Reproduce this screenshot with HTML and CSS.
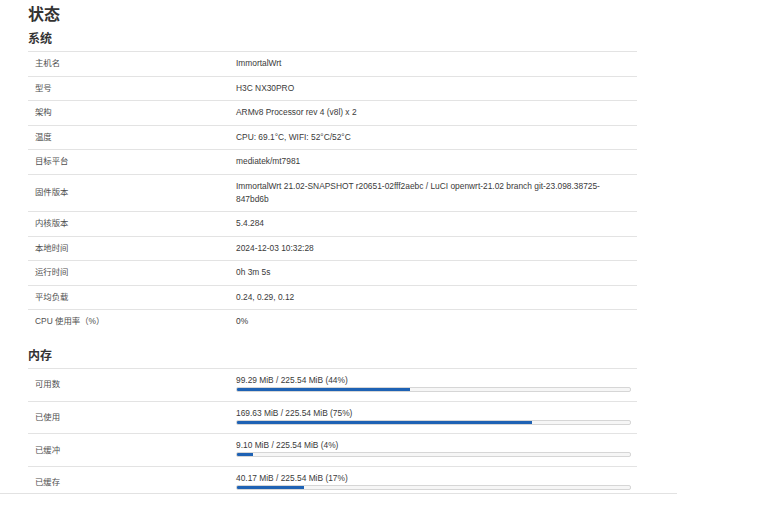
FILE: index.html
```html
<!DOCTYPE html>
<html lang="zh-CN">
<head>
    <meta charset="UTF-8">
    <meta name="viewport" content="width=device-width, initial-scale=1.0">
    <title>状态 - ImmortalWrt</title>
    <link rel="stylesheet" href="styles.css">
</head>
<body>
    <div class="main">
        <h2>状态</h2>

        <h3>系统</h3>
        <table class="info-table">
            <tr><td class="key">主机名</td><td>ImmortalWrt</td></tr>
            <tr><td class="key">型号</td><td>H3C NX30PRO</td></tr>
            <tr><td class="key">架构</td><td>ARMv8 Processor rev 4 (v8l) x 2</td></tr>
            <tr><td class="key">温度</td><td>CPU: 69.1°C, WIFI: 52°C/52°C</td></tr>
            <tr><td class="key">目标平台</td><td>mediatek/mt7981</td></tr>
            <tr><td class="key">固件版本</td><td>ImmortalWrt 21.02-SNAPSHOT r20651-02fff2aebc / LuCI openwrt-21.02 branch git-23.098.38725-847bd6b</td></tr>
            <tr><td class="key">内核版本</td><td>5.4.284</td></tr>
            <tr><td class="key">本地时间</td><td>2024-12-03 10:32:28</td></tr>
            <tr><td class="key">运行时间</td><td>0h 3m 5s</td></tr>
            <tr><td class="key">平均负载</td><td>0.24, 0.29, 0.12</td></tr>
            <tr><td class="key">CPU 使用率（%）</td><td>0%</td></tr>
        </table>

        <h3 class="section">内存</h3>
        <table class="info-table mem-table">
            <tr>
                <td class="key">可用数</td>
                <td>
                    <div class="bar-label">99.29 MiB / 225.54 MiB (44%)</div>
                    <div class="bar"><div class="bar-fill" style="width: 44%"></div></div>
                </td>
            </tr>
            <tr>
                <td class="key">已使用</td>
                <td>
                    <div class="bar-label">169.63 MiB / 225.54 MiB (75%)</div>
                    <div class="bar"><div class="bar-fill" style="width: 75%"></div></div>
                </td>
            </tr>
            <tr>
                <td class="key">已缓冲</td>
                <td>
                    <div class="bar-label">9.10 MiB / 225.54 MiB (4%)</div>
                    <div class="bar"><div class="bar-fill" style="width: 4%"></div></div>
                </td>
            </tr>
            <tr>
                <td class="key">已缓存</td>
                <td>
                    <div class="bar-label">40.17 MiB / 225.54 MiB (17%)</div>
                    <div class="bar"><div class="bar-fill" style="width: 17%"></div></div>
                </td>
            </tr>
        </table>
    </div>
</body>
</html>
```

FILE: styles.css
```css
body {
    margin: 0;
    background: #fff;
    font-family: "Liberation Sans", "Noto Sans CJK SC", sans-serif;
    color: #333;
}

.main {
    box-sizing: border-box;
    width: 677px;
    height: 494px;
    padding: 4px 40px 0 28px;
    overflow: hidden;
    border-bottom: 1px solid #e2e2e2;
}

h2 {
    margin: 0 0 5px;
    font-size: 16px;
    line-height: 22px;
    font-weight: bold;
    color: #333;
}

h3 {
    margin: 0 0 4px;
    font-size: 12px;
    line-height: 16px;
    font-weight: bold;
    color: #333;
}

h3.section {
    margin-top: 14.5px;
}

.info-table {
    width: 100%;
    border-collapse: collapse;
    table-layout: fixed;
    font-size: 8.4px;
    line-height: 13px;
}

.info-table td {
    border-top: 1px solid #e3e3e3;
    padding: 5.25px 8px;
    vertical-align: middle;
    color: #3a3a3a;
}

.info-table td.key {
    box-sizing: border-box;
    width: 200px;
    padding-left: 7px;
    color: #505050;
}

.mem-table td {
    padding: 5px 8px 8.67px;
}

.mem-table td.key {
    padding-top: 7px;
    padding-bottom: 7px;
}

.bar-label {
    line-height: 12px;
}

.bar {
    box-sizing: border-box;
    height: 5px;
    margin-top: 1px;
    margin-right: -2px;
    border: 1px solid #d6d6d6;
    border-radius: 2px;
    background: #f6f6f6;
    overflow: hidden;
}

.bar-fill {
    height: 100%;
    background: #1e62b4;
}
```
